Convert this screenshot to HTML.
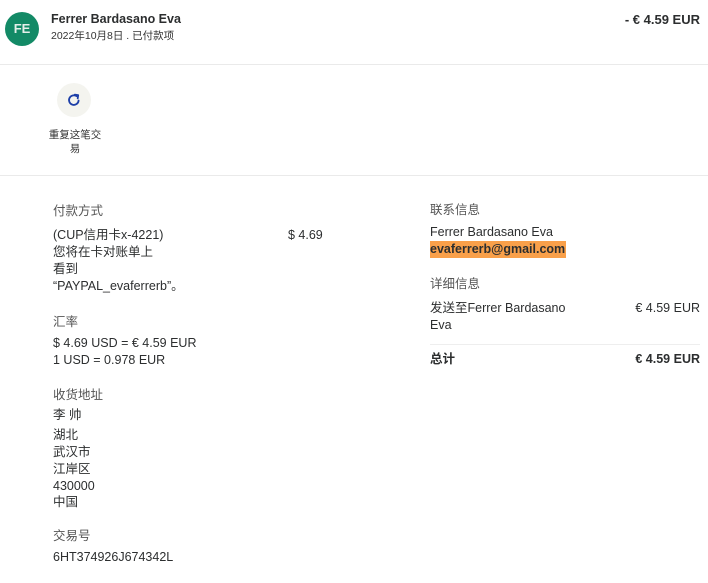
<!DOCTYPE html>
<html><head><meta charset="utf-8"><style>
*{margin:0;padding:0;box-sizing:border-box}
body{width:708px;height:583px;background:#fff;font-family:"Liberation Sans","Noto Sans CJK SC",sans-serif;color:#2c2e2f;font-size:12.5px;position:relative;overflow:hidden}
.a{position:absolute;line-height:17px;white-space:nowrap}
.g{color:#555}
.b{font-weight:bold}
.hr{position:absolute;left:0;width:708px;height:1px;background:#eaeaea}
</style></head><body>
<div style="position:absolute;left:5px;top:12px;width:34px;height:34px;border-radius:50%;background:#138a66;color:#e4efe9;font-weight:bold;font-size:13px;text-align:center;line-height:34px">FE</div>
<div class="a b" style="left:51px;top:11px;font-size:12.5px">Ferrer Bardasano Eva</div>
<div class="a" style="left:51px;top:28px;font-size:10.5px;color:#333">2022年10月8日 . 已付款项</div>
<div class="a b" style="right:8px;top:11px;font-size:13px">- € 4.59 EUR</div>
<div class="hr" style="top:64px"></div>
<div style="position:absolute;left:57px;top:83px;width:34px;height:34px;border-radius:50%;background:#f4f4ef"></div>
<svg style="position:absolute;left:65px;top:91px" width="18" height="18" viewBox="0 0 18 18"><path d="M13.6 9.5A4.8 4.8 0 1 1 11.6 5.2" fill="none" stroke="#1d3fa8" stroke-width="1.8" stroke-linecap="round"/><path d="M9.8 3.6L13.2 4.1L12.7 7.4" fill="none" stroke="#1d3fa8" stroke-width="1.8" stroke-linecap="round" stroke-linejoin="round"/></svg>
<div class="a" style="left:46px;top:128px;font-size:10.5px;width:58px;text-align:center;line-height:14px;white-space:normal;color:#333">重复这笔交易</div>
<div class="hr" style="top:175px"></div>

<div class="a g" style="left:53px;top:203px">付款方式</div>
<div class="a" style="left:53px;top:227px">(CUP信用卡x-4221)</div>
<div class="a" style="left:288px;top:227px">$ 4.69</div>
<div class="a" style="left:53px;top:244px">您将在卡对账单上</div>
<div class="a" style="left:53px;top:261px">看到</div>
<div class="a" style="left:53px;top:278px">“PAYPAL_evaferrerb”。</div>
<div class="a g" style="left:53px;top:314px">汇率</div>
<div class="a" style="left:53px;top:335px">$ 4.69 USD = € 4.59 EUR</div>
<div class="a" style="left:53px;top:352px">1 USD = 0.978 EUR</div>
<div class="a g" style="left:53px;top:387px">收货地址</div>
<div class="a" style="left:53px;top:407px">李 帅</div>
<div class="a" style="left:53px;top:427px">湖北</div>
<div class="a" style="left:53px;top:444px">武汉市</div>
<div class="a" style="left:53px;top:461px">江岸区</div>
<div class="a" style="left:53px;top:478px">430000</div>
<div class="a" style="left:53px;top:494px">中国</div>
<div class="a g" style="left:53px;top:528px">交易号</div>
<div class="a" style="left:53px;top:549px">6HT374926J674342L</div>

<div class="a g" style="left:430px;top:202px">联系信息</div>
<div class="a" style="left:430px;top:224px">Ferrer Bardasano Eva</div>
<div class="a b" style="left:430px;top:241px;background:#f9a04a;padding:0 1px 0 0">evaferrerb@gmail.com</div>
<div class="a g" style="left:430px;top:276px">详细信息</div>
<div class="a" style="left:430px;top:300px">发送至Ferrer Bardasano</div>
<div class="a" style="left:430px;top:317px">Eva</div>
<div class="a" style="right:8px;top:300px">€ 4.59 EUR</div>
<div style="position:absolute;left:430px;top:344px;width:270px;height:1px;background:#eee"></div>
<div class="a b" style="left:430px;top:351px">总计</div>
<div class="a b" style="right:8px;top:351px">€ 4.59 EUR</div>
</body></html>
